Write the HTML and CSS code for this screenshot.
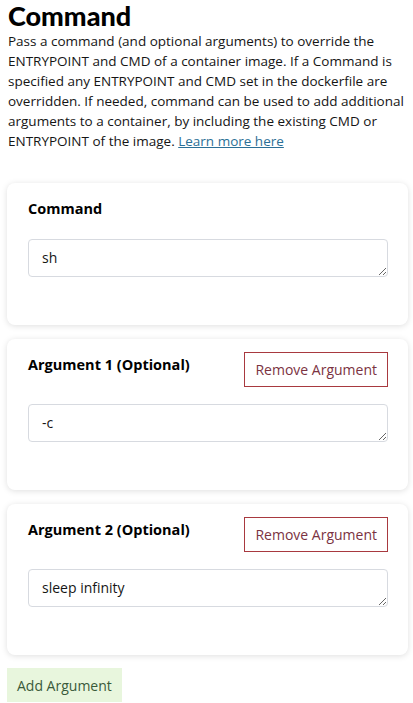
FILE: index.html
```html
<!DOCTYPE html>
<html>
<head>
<meta charset="utf-8">
<link rel="stylesheet" href="styles.css">
</head>
<body>
<main class="page">
  <h1 class="title">Command</h1>
  <p class="intro">Pass a command (and optional arguments) to override the ENTRYPOINT and CMD of a container image. If a Command is specified any ENTRYPOINT and CMD set in the dockerfile are overridden. If needed, command can be used to add additional arguments to a container, by including the existing CMD or ENTRYPOINT of the image. <a class="link" href="#">Learn more here</a></p>

  <div class="cards">
    <section class="card">
      <div class="card-head">
        <label class="label">Command</label>
      </div>
      <textarea class="field" rows="1">sh</textarea>
    </section>

    <section class="card">
      <div class="card-head">
        <label class="label">Argument 1 (Optional)</label>
        <button class="btn-remove">Remove Argument</button>
      </div>
      <textarea class="field" rows="1">-c</textarea>
    </section>

    <section class="card">
      <div class="card-head">
        <label class="label">Argument 2 (Optional)</label>
        <button class="btn-remove">Remove Argument</button>
      </div>
      <textarea class="field" rows="1">sleep infinity</textarea>
    </section>
  </div>

  <button class="btn-add">Add Argument</button>
</main>
</body>
</html>
```
FILE: styles.css
```css
* { box-sizing: border-box; }
html, body { margin: 0; padding: 0; background: #fff; }
body {
  font-family: "Open Sans", "Liberation Sans", sans-serif;
  color: #151515;
}
.page {
  padding: 0 5px 0 7px;
}
.title {
  margin: 0 0 0 1px;
  font-family: Lato, "Open Sans", sans-serif;
  font-size: 27px;
  line-height: 31px;
  font-weight: 900;
  color: #000;
}
.intro {
  margin: 0 0 0 1px;
  font-size: 13.5px;
  line-height: 20px;
  color: #151515;
}
.link {
  color: #2b6f96;
  text-decoration: underline;
}
.cards {
  margin-top: 32px;
  display: flex;
  flex-direction: column;
  gap: 14px;
}
.card {
  background: #fff;
  border-radius: 8px;
  box-shadow: 0 1px 6px rgba(0, 0, 0, 0.13);
  padding: 13px 20px 48px 21px;
  display: flex;
  flex-direction: column;
  gap: 17px;
}
.card-head {
  display: flex;
  justify-content: space-between;
  align-items: flex-start;
}
.label {
  padding: 3px 0;
  font-size: 14.5px;
  line-height: 20px;
  font-weight: 700;
  color: #000;
}
.btn-remove {
  height: 35px;
  padding: 0 10px;
  background: #fff;
  border: 1px solid #a8393f;
  color: #7b3342;
  font-family: inherit;
  font-size: 14px;
}
.field {
  display: block;
  width: 100%;
  height: 38px;
  resize: vertical;
  border: 1px solid #d7dae0;
  border-radius: 4px;
  padding: 8px 13px;
  font-family: inherit;
  font-size: 14px;
  line-height: 20px;
  color: #151515;
}
.btn-add {
  margin-top: 13px;
  height: 34px;
  padding: 0 10px;
  background: #e8f6dd;
  border: none;
  color: #3a5a3a;
  font-family: inherit;
  font-size: 14px;
}
```
